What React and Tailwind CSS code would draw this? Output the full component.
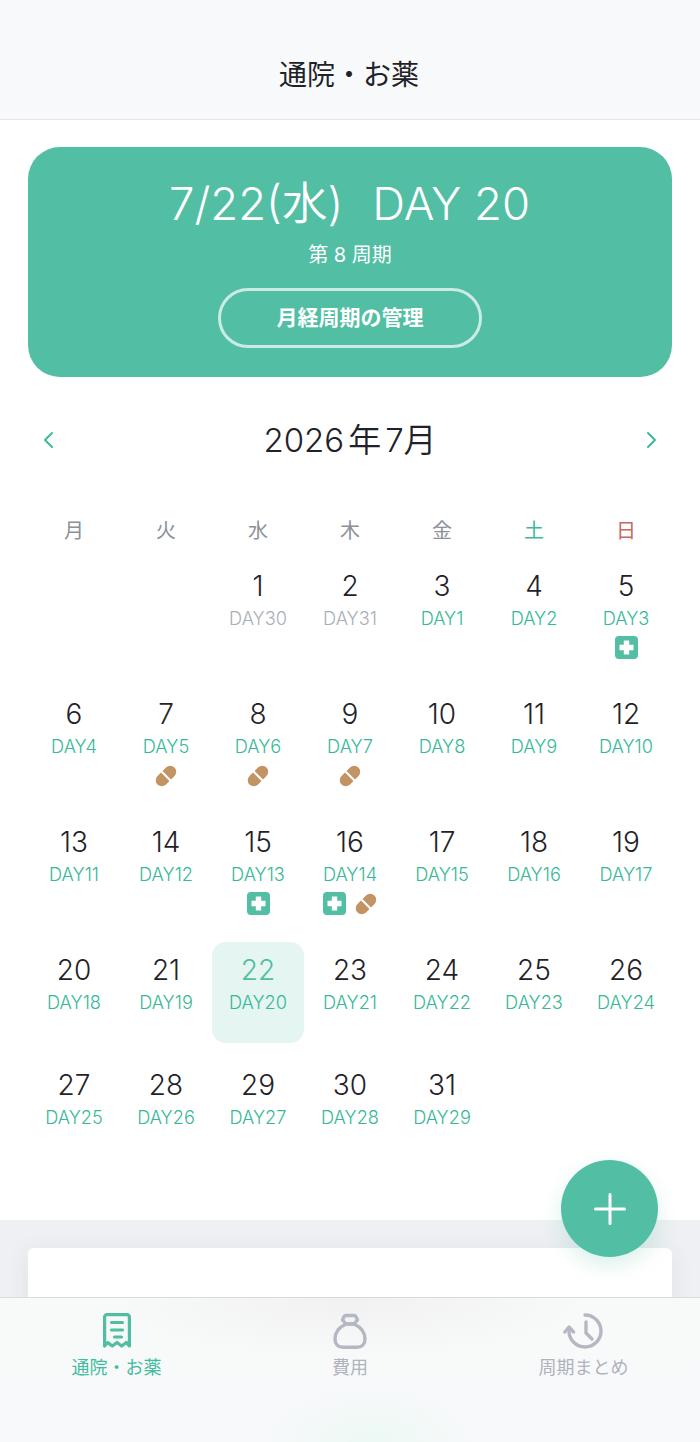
const FONT = { fontFamily: 'Inter, "Noto Sans CJK JP", sans-serif' };

const weekdays = [
  { label: '月', color: 'text-[#8b9099]' },
  { label: '火', color: 'text-[#8b9099]' },
  { label: '水', color: 'text-[#8b9099]' },
  { label: '木', color: 'text-[#8b9099]' },
  { label: '金', color: 'text-[#8b9099]' },
  { label: '土', color: 'text-[#3fb99a]' },
  { label: '日', color: 'text-[#c9695f]' },
];

// day number -> cycle day, July starts on a Wednesday
const cycleDay = (d) => (d <= 2 ? 29 + d : d - 2);
const icons = {
  5: ['cross'],
  7: ['pill'],
  8: ['pill'],
  9: ['pill'],
  15: ['cross'],
  16: ['cross', 'pill'],
};

function CrossIcon() {
  return (
    <svg width="23" height="23" viewBox="0 0 23 23">
      <rect width="23" height="23" rx="4" fill="#52bea3" />
      <path d="M8.800 4.500h5.400v4.300h4.300v5.400h-4.300v4.300H8.800v-4.300H4.500V8.800h4.300z" fill="#fff" />
    </svg>
  );
}

function PillIcon() {
  return (
    <svg width="24" height="24" viewBox="0 0 24 24">
      <g transform="rotate(-45 12 12)">
        <path d="M10.900 6H6a6 6 0 0 0 0 12h4.900z" fill="#c49364" />
        <path d="M13.100 6H18a6 6 0 0 1 0 12h-4.900z" fill="#c49364" />
      </g>
    </svg>
  );
}

function DayCell({ day }) {
  const today = day === 22;
  const past = day <= 2;
  const marks = icons[day];
  return (
    <div className={`flex flex-col items-center min-h-[101px] pt-[10px] rounded-[14px] ${today ? 'bg-[#e5f5f1]' : ''} ${marks ? 'pb-[13px]' : ''}`}>
      <div className={`h-[36px] leading-[36px] text-[28px] font-[350] ${today ? 'text-[#4fbea1]' : 'text-[#1f2329]'}`}>{day}</div>
      <div className={`h-[28px] leading-[28px] text-[18.2px] font-[350] ${past ? 'text-[#a9aeb9]' : 'text-[#37b897]'}`}>DAY{cycleDay(day)}</div>
      {marks && (
        <div className="flex items-center gap-[8px] mt-[4px] h-[23px]">
          {marks.map((m) => (m === 'cross' ? <CrossIcon key={m} /> : <PillIcon key={m} />))}
        </div>
      )}
    </div>
  );
}

function ReceiptIcon() {
  return (
    <svg className="ml-[1px]" width="28" height="36" viewBox="0 0 28 36" fill="none">
      <path d="M1.600 33V4A2.400 2.400 0 0 1 4 1.600h20A2.400 2.400 0 0 1 26.400 4v29l-3.100-3.500-4.600 3.500-4.700-3.500-4.700 3.500-4.600-3.500z" stroke="#4fbea1" strokeWidth="3.200" strokeLinejoin="round" />
      <path d="M8.500 9.500h11M8.500 17h11M11.500 24h7" stroke="#4fbea1" strokeWidth="3.200" strokeLinecap="round" />
    </svg>
  );
}

function BagIcon() {
  return (
    <svg width="34" height="36" viewBox="0 0 34 36" fill="none" stroke="#b3b8c2" strokeWidth="3.400" strokeLinejoin="round">
      <path d="M13 2.500h8c1 0 1.600.4 2 1.200L24.500 7 21 11h-8L9.500 7 11 3.700c.4-.8 1-1.200 2-1.200z" />
      <path d="M13 11C6.500 14 2 19.500 2 26c0 5 3 8.300 8 8.300h14c5 0 8-3.300 8-8.300 0-6.500-4.500-12-11-15z" />
    </svg>
  );
}

function HistoryIcon() {
  return (
    <svg className="ml-[1px]" width="42" height="36" viewBox="0 0 42 36" fill="none" stroke="#b3b8c2" strokeWidth="3.400" strokeLinecap="round" strokeLinejoin="round">
      <path d="M22 2a16 16 0 1 1-16 16v-3" />
      <path d="M1.800 19 6 14l4.500 5" />
      <path d="M23 9v11l6 6" />
    </svg>
  );
}

function Tab({ icon, label, color, className }) {
  return (
    <div className={`flex flex-col items-center ${className}`}>
      <div className="h-[36px] flex items-center justify-center">{icon}</div>
      <div className={`mt-[5px] h-[28px] leading-[28px] text-[18px] ${color}`}>{label}</div>
    </div>
  );
}

export default function App() {
  const days = Array.from({ length: 31 }, (_, i) => i + 1);
  return (
    <div className="relative w-[700px] h-[1442px] overflow-hidden bg-white" style={FONT}>
      <header className="h-[120px] bg-[#f8f9fb] border-b border-[#e4e5e8] flex items-end justify-center pb-[24px] pr-[2px]">
        <h1 className="text-[28px] leading-[40px] text-[#1f2329]">通院・お薬</h1>
      </header>

      <div className="px-[28px]">
        {/* cycle card */}
        <section className="mt-[27px] h-[230px] rounded-[32px] bg-[#52bea3] flex flex-col items-center text-white">
          <div className="mt-[26px] h-[62px] leading-[62px] text-[45.5px] font-[350] flex gap-[29px] pr-[1px]">
            <span>7/22(水)</span>
            <span>DAY 20</span>
          </div>
          <div className="mt-[6px] h-[28px] leading-[28px] text-[20px]">第 8 周期</div>
          <button className="mt-[19px] w-[264px] h-[60px] rounded-full border-[3px] border-white/70 text-[21px] font-semibold">月経周期の管理</button>
        </section>

        {/* month switcher */}
        <div className="mt-[41px] h-[44px] flex items-center justify-between px-[14px]">
          <svg width="12" height="18" viewBox="0 0 12 18" fill="none" stroke="#3fb99a" strokeWidth="2" strokeLinecap="round" strokeLinejoin="round"><path d="M10 2 3 9l7 7" /></svg>
          <div className="text-[33px] leading-[44px] font-[350] text-[#1f2329] flex gap-[4px]">
            <span>2026</span>
            <span>年</span>
            <span>7月</span>
          </div>
          <svg width="12" height="18" viewBox="0 0 12 18" fill="none" stroke="#3fb99a" strokeWidth="2" strokeLinecap="round" strokeLinejoin="round"><path d="m2 2 7 7-7 7" /></svg>
        </div>

        {/* calendar */}
        <div className="mt-[53px] grid grid-cols-7 h-[32px]">
          {weekdays.map((w) => (
            <div key={w.label} className={`text-center text-[20px] leading-[32px] ${w.color}`}>{w.label}</div>
          ))}
        </div>
        <div className="mt-[11px] grid grid-cols-7 gap-y-[14px]">
          <div className="col-span-2" />
          {days.map((d) => <DayCell key={d} day={d} />)}
        </div>
      </div>

      {/* list section behind the tab bar */}
      <section className="mt-[62px] h-[300px] bg-[#eef0f3] px-[28px] pt-[28px]">
        <div className="h-[240px] rounded-[6px] bg-white shadow-[0_4px_24px_rgba(60,70,90,0.08)]" />
      </section>

      <button className="absolute left-[561px] top-[1160px] w-[97px] h-[97px] rounded-full bg-[#52bea3] flex items-center justify-center shadow-[0_8px_20px_rgba(82,190,163,0.22)]">
        <svg width="32" height="32" viewBox="0 0 32 32" fill="none" stroke="#fff" strokeWidth="3" strokeLinecap="round"><path d="M16 1.500v29M1.500 16h29" /></svg>
      </button>

      <nav className="absolute left-0 right-0 bottom-0 h-[145px] border-t border-[#d9dadd] pt-[15px] flex bg-[radial-gradient(ellipse_240px_60px_at_350px_0px,#f1f1f1,transparent),radial-gradient(ellipse_110px_60px_at_370px_145px,#ecf9f5,transparent),linear-gradient(#f8f9f9,#f8f9fa)]">
        <Tab className="w-[233px]" icon={<ReceiptIcon />} label="通院・お薬" color="text-[#3fbd9c]" />
        <Tab className="w-[234px]" icon={<BagIcon />} label="費用" color="text-[#aeb3bd]" />
        <Tab className="w-[233px]" icon={<HistoryIcon />} label="周期まとめ" color="text-[#aeb3bd]" />
      </nav>
    </div>
  );
}
